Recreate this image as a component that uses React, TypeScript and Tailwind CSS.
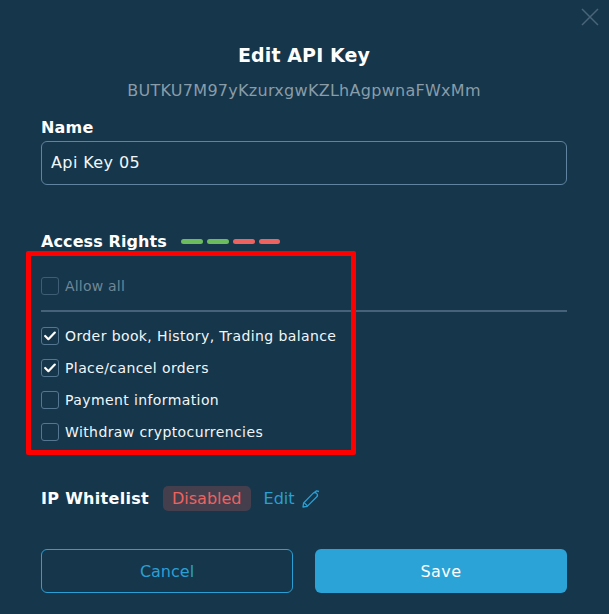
import React from "react";

function Check({ checked, label, dim }: { checked?: boolean; label: string; dim?: boolean }) {
  return (
    <div className="flex items-center gap-[6px] h-[18px]">
      <span className={`w-[18px] h-[18px] rounded-[3px] border flex items-center justify-center ${dim ? "border-[#3f5e75]" : "border-[#557690]"}`}>
        {checked && (
          <svg width="12" height="10" viewBox="0 0 12 10" fill="none">
            <path d="M1.2 5 L4.4 8.2 L10.8 1.6" stroke="#ffffff" strokeWidth="2.2" strokeLinecap="round" strokeLinejoin="round" />
          </svg>
        )}
      </span>
      <span className={`text-[14px] leading-[18px] ${dim ? "tracking-[0.2px] text-[#6f8797]" : "tracking-[0.4px] text-[#f2f6f8]"}`}>{label}</span>
    </div>
  );
}

export default function App() {
  return (
    <div className="relative w-[609px] h-[614px] bg-[#15364b] overflow-hidden font-['DejaVu_Sans',sans-serif] pl-[41px] pr-[42px]">
      <svg className="absolute left-[581px] top-[8px]" width="18" height="18" viewBox="0 0 18 18" fill="none">
        <path d="M1 1 L17 17 M17 1 L1 17" stroke="#4a6577" strokeWidth="1.5" />
      </svg>

      <h1 className="pt-[43px] pb-[1px] text-center text-[19px] leading-[24px] font-bold tracking-[0.1px] text-white">Edit API Key</h1>
      <p className="mt-[12px] text-center text-[16px] leading-[21px] tracking-[0.28px] text-[#8a9ca8]">BUTKU7M97yKzurxgwKZLhAgpwnaFWxMm</p>

      <div className="mt-[16px] text-[16px] leading-[21px] font-bold tracking-[0.2px] text-white">Name</div>
      <div className="mt-[3px] h-[44px] rounded-[6px] border border-[#5f83a0] pl-[9px] pr-[10px] flex items-center text-[16px] tracking-[0.4px] text-[#f2f6f8]">Api Key 05</div>

      <div className="mt-[46px] flex items-center gap-[14px]">
        <span className="text-[16px] leading-[21px] font-bold tracking-[0.1px] text-white">Access Rights</span>
        <div className="flex gap-[4px]">
          <span className="w-[22px] h-[5px] rounded-full bg-[#6cbc5e]" />
          <span className="w-[22px] h-[5px] rounded-full bg-[#6cbc5e]" />
          <span className="w-[22px] h-[5px] rounded-full bg-[#ec6360]" />
          <span className="w-[21px] h-[5px] rounded-full bg-[#ec6360]" />
        </div>
      </div>

      <div className="mt-[25px] pb-[15px] border-b-2 border-[#45627a]">
        <Check dim label="Allow all" />
      </div>
      <div className="mt-[15px] flex flex-col gap-[14px]">
        <Check checked label="Order book, History, Trading balance" />
        <Check checked label="Place/cancel orders" />
        <Check label="Payment information" />
        <Check label="Withdraw cryptocurrencies" />
      </div>

      <div className="mt-[45px] flex items-center">
        <span className="text-[16px] leading-[21px] font-bold tracking-[0.3px] text-white">IP Whitelist</span>
        <span className="ml-[14px] h-[25px] px-[9px] rounded-[5px] bg-[#453e4d] text-[16px] leading-[25px] text-[#ec6360]">Disabled</span>
        <span className="ml-[13px] text-[16px] leading-[21px] text-[#2b9fd4]">Edit</span>
        <svg className="ml-[7px]" width="18" height="18" viewBox="0 0 18 18" fill="none" stroke="#2b9fd4" strokeWidth="1.3" strokeLinejoin="round">
          <path d="M1 17 L1.6 13 L11 3.4 C12 2.4 13.6 2.4 14.6 3.4 C15.6 4.4 15.6 6 14.6 7 L5.2 16.4 Z" />
          <path d="M2 12.6 L5.6 16 M12.5 2.5 L14.5 0.8 L17 1.5" />
        </svg>
      </div>

      <div className="mt-[38px] flex gap-[22px]">
        <button className="w-[252px] h-[44px] pt-[1px] rounded-[6px] border border-[#2b9fd4] text-[16px] text-[#2b9fd4]">Cancel</button>
        <button className="w-[252px] h-[44px] pt-[2px] rounded-[6px] bg-[#2ba3d6] text-[16px] tracking-[0.4px] text-white">Save</button>
      </div>

      <div className="absolute left-[26px] top-[251px] w-[330px] h-[204px] border-[5px] border-[#ff0000] rounded-[2px] pointer-events-none" />
    </div>
  );
}
